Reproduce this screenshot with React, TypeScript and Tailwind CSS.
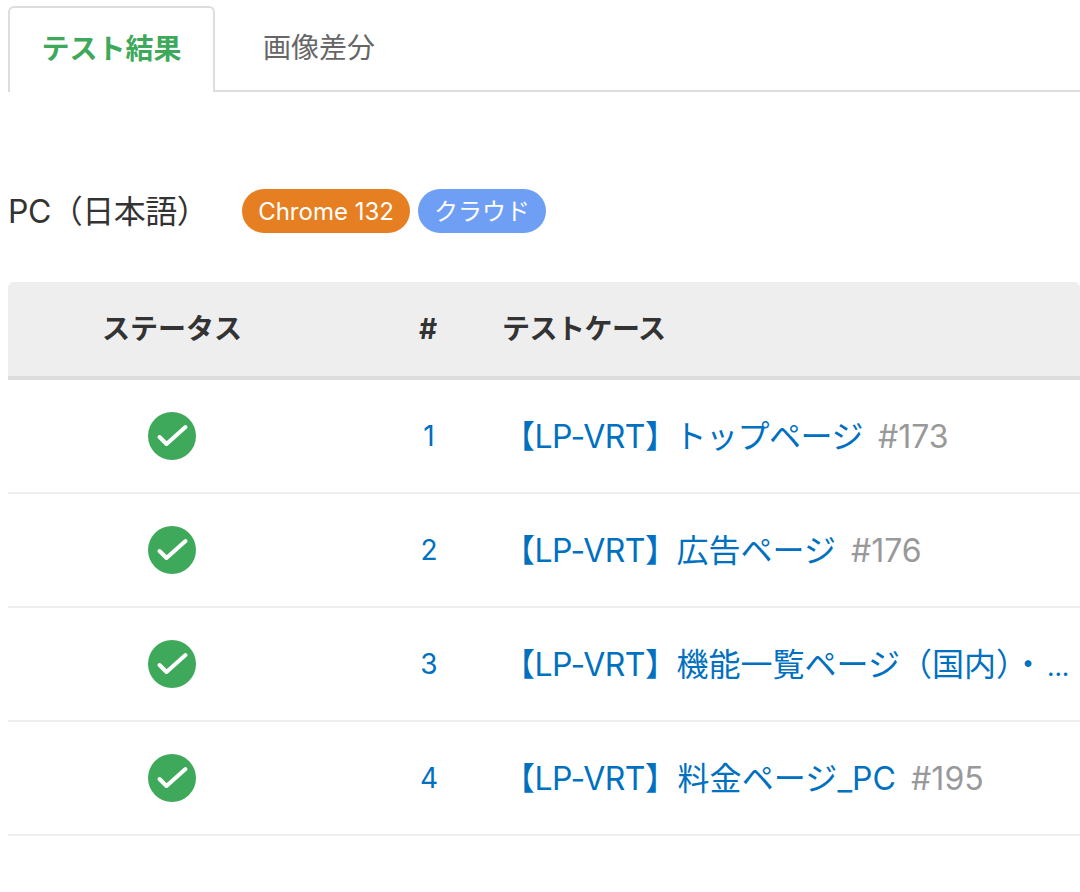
import type { ReactNode } from "react";

const fontStack = "font-['Inter','Noto_Sans_CJK_JP',sans-serif]";

type Row = {
  no: number;
  name: ReactNode;
  issue?: string;
};

const rows: Row[] = [
  { no: 1, name: <span className="ml-[-2px] tracking-[-0.5px]">トップページ</span>, issue: "#173" },
  { no: 2, name: "広告ページ", issue: "#176" },
  {
    no: 3,
    name: (
      <>
        機能一覧ページ（国内）・
        <span className="ml-[3px] text-[26px]">...</span>
      </>
    ),
  },
  { no: 4, name: <span className="ml-px tracking-[0.1px]">料金ページ_PC</span>, issue: "#195" },
];

function CheckIcon() {
  return (
    <svg width="48" height="48" viewBox="0 0 48 48">
      <circle cx="24" cy="24" r="24" fill="#3fa95b" />
      <path
        d="M11.5 25 L18.5 32 L37.5 15"
        fill="none"
        stroke="#fff"
        strokeWidth="4"
        strokeLinecap="round"
        strokeLinejoin="round"
      />
    </svg>
  );
}

export default function App() {
  return (
    <div className={`${fontStack} h-[892px] w-[1080px] overflow-hidden bg-white pl-2 text-[#333]`}>
      <div className="flex h-[92px] border-b-2 border-[#ddd] pt-1.5">
        <div className="mb-[-2px] flex h-[86px] w-[207px] items-center justify-center rounded-t-md border-2 border-b-0 border-[#ddd] bg-white pb-0.5 text-[28px] font-bold text-[#3fa95b]">
          テスト結果
        </div>
        <div className="flex h-[84px] items-center pl-12 text-[28px] text-[#666]">画像差分</div>
      </div>

      <div className="mt-[97px] flex h-11 items-center">
        <h2 className="w-[234px] pt-0.5 text-[32px] font-normal tracking-[-0.5px]">PC（日本語）</h2>
        <div className="flex gap-2 text-2xl leading-none text-white">
          <span className="flex h-11 w-[168px] items-center justify-center rounded-full bg-[#e67e22] pt-0.5">
            Chrome 132
          </span>
          <span className="flex h-11 w-32 items-center justify-center rounded-full bg-[#6f9ef5] pt-0.5">
            クラウド
          </span>
        </div>
      </div>

      <div className="mt-[49px]">
        <div className="flex h-[98px] items-center rounded-t-md border-b-4 border-[#ddd] bg-[#eee] text-[28px] font-bold">
          <div className="w-[328px] text-center">ステータス</div>
          <div className="ml-[35px] w-[114px] text-center">#</div>
          <div className="ml-[17px] tracking-[-0.5px]">テストケース</div>
        </div>
        {rows.map((row) => (
          <div key={row.no} className="flex h-[114px] items-center border-b-2 border-[#eee]">
            <div className="flex w-[328px] justify-center">
              <CheckIcon />
            </div>
            <div className="ml-9 w-[114px] text-center text-[28px] text-[#0070c0]">{row.no}</div>
            <div className="ml-[17px] min-w-0 flex-1 whitespace-nowrap pt-0.5 text-[32px] text-[#0070c0]">
              <span className="tracking-[-0.5px]">【LP-VRT】</span>
              {row.name}
              {row.issue && <span className="ml-[15px] text-[#999]">{row.issue}</span>}
            </div>
          </div>
        ))}
      </div>
    </div>
  );
}
